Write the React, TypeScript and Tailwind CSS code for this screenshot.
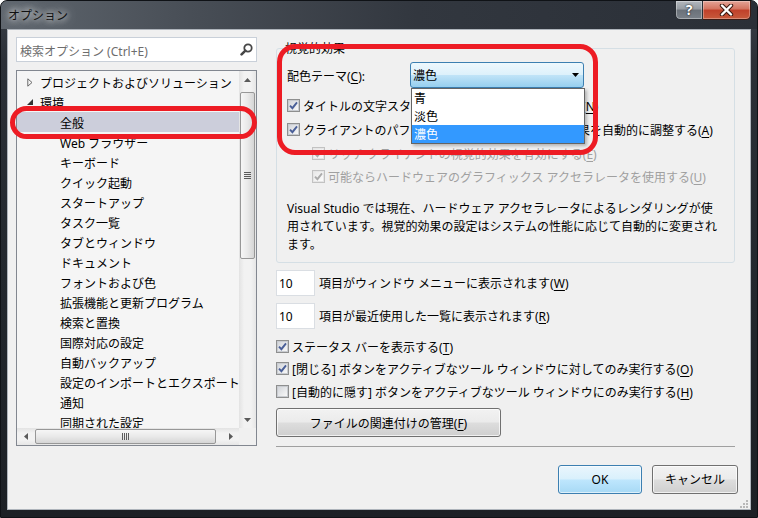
import React from "react";

function U({ c }: { c: string }) {
  return <span className="underline underline-offset-[2px]">{c}</span>;
}

function Check({ checked = false, disabled = false }: { checked?: boolean; disabled?: boolean }) {
  return (
    <span
      className={`flex w-[13px] h-[13px] shrink-0 items-center justify-center border ${
        disabled ? "border-[#c2c2c2]" : "border-[#8e8f8f]"
      } bg-white`}
    >
      <span
        className={`flex w-[11px] h-[11px] items-center justify-center border ${
          disabled
            ? "border-[#e6e6e6] bg-[linear-gradient(135deg,#e9e9e9,#fcfcfc)]"
            : "border-[#c9ccd1] bg-[linear-gradient(135deg,#d3d6db,#f8f8f8)]"
        }`}
      >
        {checked && (
          <svg width="9" height="9" viewBox="0 0 9 9">
            <path
              d="M1 4.6 L3.4 7.2 L8 1.4"
              fill="none"
              stroke={disabled ? "#acacac" : "#4a5f98"}
              strokeWidth="1.9"
            />
          </svg>
        )}
      </span>
    </span>
  );
}

function UpArrow() {
  return (
    <svg width="7" height="4" viewBox="0 0 7 4">
      <path d="M0 4 L3.5 0 L7 4 Z" fill="#5a5a5a" />
    </svg>
  );
}
function DownArrow() {
  return (
    <svg width="7" height="4" viewBox="0 0 7 4">
      <path d="M0 0 L3.5 4 L7 0 Z" fill="#5a5a5a" />
    </svg>
  );
}
function LeftArrow() {
  return (
    <svg width="4" height="7" viewBox="0 0 4 7">
      <path d="M4 0 L0 3.5 L4 7 Z" fill="#5a5a5a" />
    </svg>
  );
}
function RightArrow() {
  return (
    <svg width="4" height="7" viewBox="0 0 4 7">
      <path d="M0 0 L4 3.5 L0 7 Z" fill="#5a5a5a" />
    </svg>
  );
}

const children = [
  "全般",
  "Web ブラウザー",
  "キーボード",
  "クイック起動",
  "スタートアップ",
  "タスク一覧",
  "タブとウィンドウ",
  "ドキュメント",
  "フォントおよび色",
  "拡張機能と更新プログラム",
  "検索と置換",
  "国際対応の設定",
  "自動バックアップ",
  "設定のインポートとエクスポート",
  "通知",
  "同期された設定",
];

export default function App() {
  return (
    <div className="w-[758px] h-[518px] relative flex flex-col overflow-hidden rounded-t-[7px] border border-[#0f1216] bg-[linear-gradient(180deg,#3a4048_0px,#2b3037_60px,#22272d_300px,#1c2025_100%)] font-['Noto_Sans','Noto_Sans_CJK_JP',sans-serif] text-[12px] leading-[16px] text-black">
      {/* title bar */}
      <div className="h-[28px] shrink-0 flex justify-between bg-[linear-gradient(90deg,#5f666e_0%,#484e56_25%,#32373f_55%,#2a2f37_100%)]">
        <div className="pl-[7px] pt-[7px] text-[#111] [text-shadow:0_0_6px_#ffffff,0_0_10px_rgba(255,255,255,0.8),0_0_16px_rgba(255,255,255,0.5)]">
          オプション
        </div>
        <div className="flex h-[20px] -mt-px mr-[6px]">
          <div className="w-[28px] h-[20px] flex items-center justify-center rounded-bl-[5px] border border-[#2b3036] bg-[linear-gradient(180deg,#b3b8be_0%,#959ba2_45%,#6a7179_50%,#7a8189_100%)] shadow-[inset_0_0_0_1px_rgba(255,255,255,0.35)]">
            <span className="text-[14px] font-bold leading-[14px] text-white [text-shadow:0_0_2px_#1f2328,0_0_1px_#1f2328]">?</span>
          </div>
          <div className="w-[48px] h-[20px] flex items-center justify-center rounded-br-[5px] border border-l-0 border-[#3a1a14] bg-[linear-gradient(180deg,#e4a497_0%,#d3735f_45%,#c0402a_50%,#c75a3c_100%)] shadow-[inset_0_0_0_1px_rgba(255,255,255,0.3)]">
            <svg width="15" height="12" viewBox="0 0 15 12">
              <path d="M3 1.5 L12 10.5 M12 1.5 L3 10.5" stroke="#3b1810" strokeWidth="4.4" strokeLinecap="round" />
              <path d="M3 1.5 L12 10.5 M12 1.5 L3 10.5" stroke="#ffffff" strokeWidth="2.4" strokeLinecap="round" />
            </svg>
          </div>
        </div>
      </div>

      {/* client area */}
      <div className="relative flex-1 mx-[6px] mb-[7px] flex bg-[#f0f0f0] border border-[#aeb4bb]">
        {/* left column */}
        <div className="ml-[8px] mt-[7px] w-[241px] shrink-0 flex flex-col">
          <div className="h-[25px] flex items-center justify-between bg-white border border-[#c9d0d9] pl-[3px] pr-[3px]">
            <span className="pt-[4px] text-[#6d6d6d]">検索オプション (Ctrl+E)</span>
            <svg width="13" height="13" viewBox="0 0 13 13">
              <circle cx="8" cy="5" r="3.7" fill="none" stroke="#474747" strokeWidth="1.8" />
              <path d="M5.4 7.6 L1.6 11.4" stroke="#474747" strokeWidth="2.6" strokeLinecap="round" />
            </svg>
          </div>
          <div className="mt-[8px] h-[376px] flex flex-col border border-[#828790] bg-[#f5f5f5]">
            <div className="flex h-[357px]">
              <div className="flex-1 overflow-hidden pt-[1px]">
                <div className="h-[20px] flex items-center whitespace-nowrap">
                  <span className="pl-[10px] mr-[7px] flex">
                    <svg width="6" height="9" viewBox="0 0 6 9">
                      <path d="M0.8 0.8 L5 4.5 L0.8 8.2 Z" fill="none" stroke="#6a6a6a" strokeWidth="1" />
                    </svg>
                  </span>
                  <span className="pt-[4px]">プロジェクトおよびソリューション</span>
                </div>
                <div className="h-[20px] flex items-center whitespace-nowrap">
                  <span className="pl-[10px] mr-[7px] flex">
                    <svg width="6" height="6" viewBox="0 0 6 6">
                      <path d="M6 0 L6 6 L0 6 Z" fill="#333333" />
                    </svg>
                  </span>
                  <span className="pt-[4px]">環境</span>
                </div>
                {children.map((t, i) => (
                  <div
                    key={t}
                    className={`h-[20px] flex items-center whitespace-nowrap pl-[43px] pt-[4px] ${i === 0 ? "bg-[#cccedb]" : ""}`}
                  >
                    {t}
                  </div>
                ))}
              </div>
              {/* vertical scrollbar */}
              <div className="w-[17px] shrink-0 flex flex-col bg-[linear-gradient(90deg,#e3e3e3,#f2f2f2_30%,#f2f2f2_70%,#e6e6e6)]">
                <div className="h-[17px] flex items-center justify-center">
                  <UpArrow />
                </div>
                <div className="flex-1 pt-[4px]">
                  <div className="h-[167px] mx-[1px] rounded-[2px] border border-[#979797] bg-[linear-gradient(90deg,#f6f6f6,#e9e9e9_50%,#d5d5d5)] flex items-center justify-center">
                    <svg width="7" height="7" viewBox="0 0 7 7">
                      <rect x="0" y="0" width="7" height="1" fill="#5c5c5c" />
                      <rect x="0" y="2" width="7" height="1" fill="#5c5c5c" />
                      <rect x="0" y="4" width="7" height="1" fill="#5c5c5c" />
                      <rect x="0" y="6" width="7" height="1" fill="#5c5c5c" />
                    </svg>
                  </div>
                </div>
                <div className="h-[17px] flex items-center justify-center">
                  <DownArrow />
                </div>
              </div>
            </div>
            {/* horizontal scrollbar */}
            <div className="flex h-[17px]">
              <div className="flex-1 flex bg-[linear-gradient(180deg,#e3e3e3,#f2f2f2_30%,#f2f2f2_70%,#e6e6e6)]">
                <div className="w-[17px] flex items-center justify-center">
                  <LeftArrow />
                </div>
                <div className="flex-1 pl-[1px] flex items-center">
                  <div className="w-[181px] h-[15px] rounded-[2px] border border-[#979797] bg-[linear-gradient(180deg,#f6f6f6,#e9e9e9_50%,#d5d5d5)] flex items-center justify-center">
                    <svg width="7" height="7" viewBox="0 0 7 7">
                      <rect x="0" y="0" width="1" height="7" fill="#5c5c5c" />
                      <rect x="2" y="0" width="1" height="7" fill="#5c5c5c" />
                      <rect x="4" y="0" width="1" height="7" fill="#5c5c5c" />
                      <rect x="6" y="0" width="1" height="7" fill="#5c5c5c" />
                    </svg>
                  </div>
                </div>
                <div className="w-[17px] flex items-center justify-center">
                  <RightArrow />
                </div>
              </div>
              <div className="w-[17px] bg-[#f0f0f0]" />
            </div>
          </div>
        </div>

        {/* right column */}
        <div className="ml-[19px] w-[459px] shrink-0 pt-[10px] flex flex-col">
          <fieldset className="min-w-0 rounded-[3px] border border-[#d5dfe5] px-[10px] pb-[8px]">
            <legend className="ml-[-4px] px-[2px] leading-[16px] pt-[1px]">視覚的効果</legend>
            <div className="mt-[5px] h-[26px] flex items-center">
              <span className="w-[123px] shrink-0 pt-[3px]">
                配色テーマ(<U c="C" />):
              </span>
              <div className="relative w-[174px] h-[26px] flex items-center justify-between rounded-[3px] border border-[#3c7fb1] bg-[linear-gradient(180deg,#eef8fd_0%,#ddf1fb_48%,#bfe3f7_52%,#96cfef_100%)] pl-[2px] pr-[4px]">
                <span className="pt-[2px]">濃色</span>
                <svg width="7" height="4" viewBox="0 0 7 4">
                  <path d="M0 0 L3.5 4 L7 0 Z" fill="#000000" />
                </svg>
                <div className="absolute left-0 top-[25px] z-20 w-[174px] flex flex-col border border-[#646464] bg-white shadow-[2px_2px_3px_rgba(0,0,0,0.25)]">
                  <div className="h-[18px] flex items-center pl-[2px] pt-[2px]">青</div>
                  <div className="h-[18px] flex items-center pl-[2px] pt-[2px]">淡色</div>
                  <div className="h-[18px] flex items-center pl-[2px] pt-[2px] bg-[#3399ff] text-white">濃色</div>
                </div>
              </div>
            </div>
            <div className="mt-[6px] h-[22px] flex items-center gap-[3px] whitespace-nowrap">
              <Check checked />
              <span className="pt-[3px]">
                タイトルの文字スタイルをメニュー バーに適用する(<U c="N" />)
              </span>
            </div>
            <div className="mt-[2px] h-[22px] flex items-center gap-[3px] whitespace-nowrap">
              <Check checked />
              <span className="pt-[3px]">
                クライアントのパフォーマンスに基づいて視覚的効果を自動的に調整する(<U c="A" />)
              </span>
            </div>
            <div className="mt-[2px] ml-[25px] h-[22px] flex items-center gap-[3px] whitespace-nowrap text-[#a0a0a0]">
              <Check checked disabled />
              <span className="pt-[3px]">
                リッチ クライアントの視覚的効果を有効にする(<U c="E" />)
              </span>
            </div>
            <div className="mt-[1px] ml-[25px] h-[22px] flex items-center gap-[3px] whitespace-nowrap text-[#a0a0a0]">
              <Check checked disabled />
              <span className="pt-[3px]">
                可能ならハードウェアのグラフィックス アクセラレータを使用する(<U c="U" />)
              </span>
            </div>
            <p className="mt-[13px] leading-[18px] whitespace-nowrap">
              Visual Studio では現在、ハードウェア アクセラレータによるレンダリングが使
              <br />
              用されています。視覚的効果の設定はシステムの性能に応じて自動的に変更され
              <br />
              ます。
            </p>
          </fieldset>

          <div className="mt-[7px] h-[26px] flex items-center gap-[4px] whitespace-nowrap">
            <div className="w-[39px] h-[26px] flex items-center pl-[2px] pt-[1px] bg-white border border-[#dadee3]">10</div>
            <span className="pt-[1px]">
              項目がウィンドウ メニューに表示されます(<U c="W" />)
            </span>
          </div>
          <div className="mt-[7px] h-[26px] flex items-center gap-[4px] whitespace-nowrap">
            <div className="w-[39px] h-[26px] flex items-center pl-[2px] pt-[1px] bg-white border border-[#dadee3]">10</div>
            <span className="pt-[2px]">
              項目が最近使用した一覧に表示されます(<U c="R" />)
            </span>
          </div>
          <div className="mt-[6px] h-[22px] flex items-center gap-[3px] whitespace-nowrap">
            <Check checked />
            <span className="pt-[3px]">
              ステータス バーを表示する(<U c="T" />)
            </span>
          </div>
          <div className="h-[22px] flex items-center gap-[3px] whitespace-nowrap">
            <Check checked />
            <span className="pt-[3px]">
              [閉じる] ボタンをアクティブなツール ウィンドウに対してのみ実行する(<U c="O" />)
            </span>
          </div>
          <div className="mt-[1px] h-[22px] flex items-center gap-[3px] whitespace-nowrap">
            <Check />
            <span className="pt-[3px]">
              [自動的に隠す] ボタンをアクティブなツール ウィンドウにのみ実行する(<U c="H" />)
            </span>
          </div>
          <div className="mt-[6px] w-[225px] h-[29px] flex items-center justify-center pt-[2px] rounded-[3px] border border-[#707070] bg-[linear-gradient(180deg,#f2f2f2_0%,#ebebeb_48%,#dddddd_52%,#cfcfcf_100%)] shadow-[inset_0_0_0_1px_rgba(255,255,255,0.7)]">
            ファイルの関連付けの管理(<U c="F" />)
          </div>
          <div className="mt-[9px] h-px bg-[#a0a0a0]" />
          <div className="mt-[18px] mr-[-3px] flex justify-end gap-[10px]">
            <div className="w-[84px] h-[29px] flex items-center justify-center pt-[1px] rounded-[3px] border border-[#3c7fb1] bg-[linear-gradient(180deg,#eaf6fd_0%,#d9f0fc_48%,#bee6fd_52%,#a7d9f5_100%)] shadow-[inset_0_0_0_1px_rgba(255,255,255,0.6)]">
              OK
            </div>
            <div className="w-[86px] h-[29px] flex items-center justify-center pt-[1px] rounded-[3px] border border-[#707070] bg-[linear-gradient(180deg,#f2f2f2_0%,#ebebeb_48%,#dddddd_52%,#cfcfcf_100%)] shadow-[inset_0_0_0_1px_rgba(255,255,255,0.7)]">
              キャンセル
            </div>
          </div>
        </div>

        {/* size grip */}
        <svg className="absolute right-[2px] bottom-[1px]" width="9" height="9" viewBox="0 0 9 9">
          <rect x="7" y="1" width="2" height="2" fill="#b8b8b8" />
          <rect x="4" y="4" width="2" height="2" fill="#b8b8b8" />
          <rect x="7" y="4" width="2" height="2" fill="#b8b8b8" />
          <rect x="1" y="7" width="2" height="2" fill="#b8b8b8" />
          <rect x="4" y="7" width="2" height="2" fill="#b8b8b8" />
          <rect x="7" y="7" width="2" height="2" fill="#b8b8b8" />
        </svg>

        {/* red annotations */}
        <div className="absolute left-[2px] top-[76px] z-30 w-[247px] h-[33px] rounded-[17px] border-[5px] border-[#ed1c24] pointer-events-none" />
        <div className="absolute left-[269px] top-[14px] z-30 w-[321px] h-[111px] rounded-[18px] border-[5px] border-[#ed1c24] pointer-events-none" />
      </div>
    </div>
  );
}
